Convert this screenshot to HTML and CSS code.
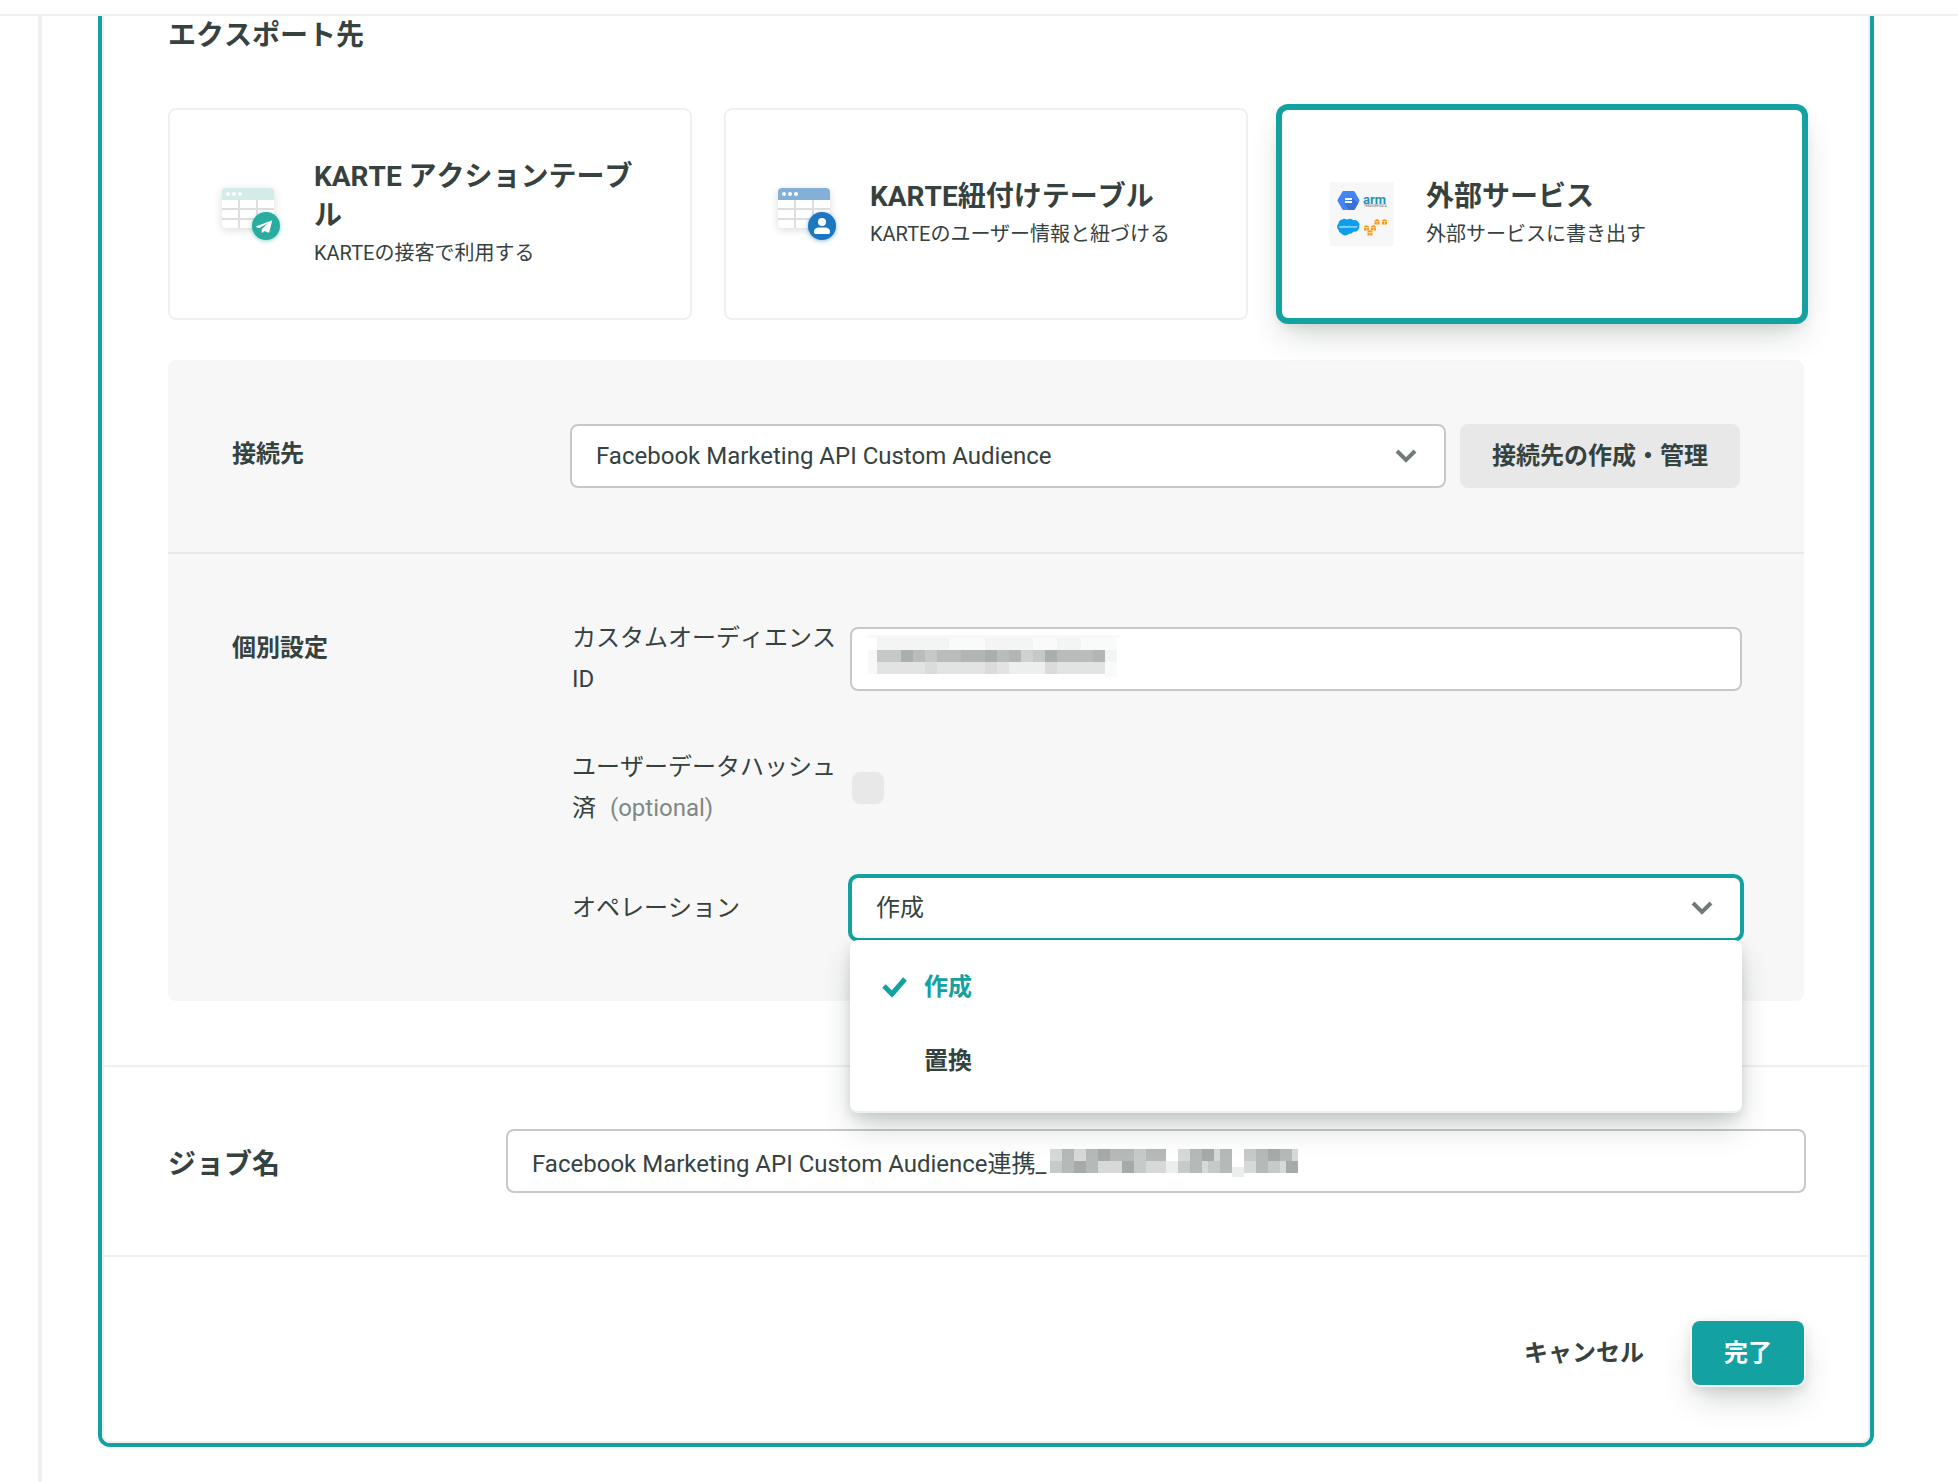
FILE: index.html
```html
<!DOCTYPE html>
<html lang="ja">
<head>
<meta charset="utf-8">
<meta name="viewport" content="width=device-width, initial-scale=1">
<title>エクスポート先</title>
<link rel="stylesheet" href="styles.css">
</head>
<body>
<header class="topbar"></header>
<div class="layout">
  <aside class="rail"></aside>
  <main class="main">
    <form class="card">
      <section class="export">
        <h2 class="heading">エクスポート先</h2>
        <div class="targets">
          <button type="button" class="target">
            <svg class="target-icon" viewBox="0 0 64 64" aria-hidden="true">
              <rect class="sheet" x="4" y="6" width="52" height="40" rx="4"/>
              <path fill="#d4ece9" d="M8 6h44a4 4 0 0 1 4 4v8H4v-8a4 4 0 0 1 4-4z"/>
              <path stroke="#dedede" stroke-width="2" d="M4 27h52M4 37h52M21 18v28M39 18v28"/>
              <g fill="#fff"><circle cx="10" cy="12" r="2"/><circle cx="16" cy="12" r="2"/><circle cx="22" cy="12" r="2"/></g>
              <circle class="badge-teal" cx="48" cy="44" r="14"/>
              <path fill="#fff" d="M53.500 38.500 38.500 44.200q-.9.500 0 1l3 .9 8.500-5-6.300 6.100v3q.2 1 1 .4l1.700-1.700 3.600 1.700q1 .3 1.300-.7l2.700-10.500q.1-1.200-.5-.9z"/>
            </svg>
            <span class="target-text"><span class="target-title">KARTE アクションテーブル</span><span class="target-note">KARTEの接客で利用する</span></span>
          </button>
          <button type="button" class="target">
            <svg class="target-icon" viewBox="0 0 64 64" aria-hidden="true">
              <rect class="sheet" x="4" y="6" width="52" height="40" rx="4"/>
              <path fill="#82b0d9" d="M8 6h44a4 4 0 0 1 4 4v8H4v-8a4 4 0 0 1 4-4z"/>
              <path stroke="#dedede" stroke-width="2" d="M4 27h52M4 37h52M21 18v28M39 18v28"/>
              <g fill="#fff"><circle cx="10" cy="12" r="2"/><circle cx="16" cy="12" r="2"/><circle cx="22" cy="12" r="2"/></g>
              <circle class="badge-blue" cx="48" cy="44" r="14"/>
              <circle fill="#fff" cx="48" cy="40" r="4"/>
              <path fill="#fff" d="M40 50c0-5 5-4.500 8-4.500s8-.5 8 4.500q0 2-1.500 2h-13q-1.500 0-1.500-2z"/>
            </svg>
            <span class="target-text"><span class="target-title">KARTE紐付けテーブル</span><span class="target-note">KARTEのユーザー情報と紐づける</span></span>
          </button>
          <button type="button" class="target target-on" aria-pressed="true">
            <svg class="target-icon" viewBox="0 0 64 64" aria-hidden="true">
              <rect width="64" height="64" rx="2" fill="#f7f7f7"/>
              <path fill="#4285f4" d="M13.500 9h10q.8 0 1.200.7l4.600 8q.5.800 0 1.600l-4.600 8q-.4.700-1.200.7h-10q-.8 0-1.200-.7l-4.600-8q-.5-.8 0-1.600l4.600-8q.4-.7 1.200-.7z"/>
              <path fill="#3a71d8" d="m22 16 6.500 5-3.800 6.500-1.200.5h-4.700l-4-6.500z"/>
              <path fill="#fff" d="M15 16h7v2h-7zM15 19h7v2h-7z"/>
              <text class="logo-arm" x="33" y="22">arm</text>
              <text class="logo-data" x="34" y="25">TREASURE DATA</text>
              <path fill="#0d9dea" d="M12 37.500a5 5 0 0 1 5 .2 5.200 5.200 0 0 1 6.500.5 5 5 0 0 1 5.800 5.800 5 5 0 0 1-6 5.700 4.200 4.200 0 0 1-4.300 2 5 5 0 0 1-8-.4 4 4 0 0 1-2.500-3.200 4.500 4.500 0 0 1 0-6.600 4.600 4.600 0 0 1 3.500-4z"/>
              <text class="logo-cloud" x="9" y="46">salesforce</text>
              <g fill="#f7981d">
                <path d="M44.500 38.500 47 37l2.500 1.500v4h-5zM52 38.500l2.500-1.500 2.500 1.500v4h-5zM34 44.500l2.500-1.500 2.500 1.500v4h-5zM41 44.500l2.500-1.500 2.500 1.500v4h-5zM37.500 49.500l2.500-1.500 2.500 1.500v4h-5z"/>
              </g>
              <path stroke="#fce0b8" stroke-width=".7" d="M44.500 39.500h5M52 39.500h5M34 45.500h5M41 45.500h5M37.500 50.500h5M47 39.500v3M54.500 39.500v3M36.500 45.500v3M43.500 45.500v3M40 50.500v3"/>
            </svg>
            <span class="target-text"><span class="target-title">外部サービス</span><span class="target-note">外部サービスに書き出す</span></span>
          </button>
        </div>

        <div class="panel">
          <div class="panel-row">
            <label class="row-label" for="dest">接続先</label>
            <div class="dest">
              <div class="select-wrap">
                <select class="field" id="dest"><option>Facebook Marketing API Custom Audience</option></select>
                <svg class="chevron" viewBox="0 0 24 16" aria-hidden="true"><path d="m3 3 9 9 9-9"/></svg>
              </div>
              <button type="button" class="btn-sub">接続先の作成・管理</button>
            </div>
          </div>
          <div class="panel-row detail">
            <div class="row-label">個別設定</div>
            <div class="options">
              <label class="opt-label" for="audience">カスタムオーディエンス ID</label>
              <div class="masked">
                <input class="field" id="audience" type="text">
                <svg class="mosaic" width="252" height="46" viewBox="0 0 252 46" shape-rendering="crispEdges" aria-hidden="true">
                  <path fill="#f8f8f8" d="M0 0h252v3H0zM0 15h9v24H0z"/>
                  <path fill="#f3f4f4" d="M9 3h72v12H9zM117 3h48v12h-48zM189 3h24v12h-24zM237 15h12v12h-12z"/>
                  <path fill="#f9fafa" d="M81 3h36v12H81zM165 3h24v12h-24zM213 3h36v12h-36zM237 27h12v15h-12z"/>
                  <path fill="#b8bcbb" d="M9 15h228v12H9z"/>
                  <path fill="#c4c8c8" d="M9 15h24v12H9zM57 15h12v12H57zM165 15h12v12h-12z"/>
                  <path fill="#cdd1d1" d="M153 15h12v12h-12z"/>
                  <path fill="#a9afae" d="M33 15h12v12H33zM117 15h12v12h-12zM177 15h12v12h-12z"/>
                  <path fill="#b1b5b4" d="M93 15h24v12H93zM141 15h12v12h-12zM225 15h12v12h-12z"/>
                  <path fill="#e2e4e3" d="M9 27h228v12H9z"/>
                  <path fill="#dadcdb" d="M57 27h12v12H57zM117 27h12v12h-12zM177 27h12v12h-12z"/>
                  <path fill="#edefee" d="M141 27h36v12h-36z"/>
                </svg>
              </div>
              <label class="opt-label" for="hashed">ユーザーデータハッシュ済 <span class="optional">(optional)</span></label>
              <input class="check" id="hashed" type="checkbox">
              <label class="opt-label" for="operation">オペレーション</label>
              <div class="select-wrap">
                <select class="field field-open" id="operation"><option>作成</option><option>置換</option></select>
                <svg class="chevron" viewBox="0 0 24 16" aria-hidden="true"><path d="m3 3 9 9 9-9"/></svg>
                <div class="menu" role="listbox">
                  <button type="button" class="menu-item menu-on" role="option" aria-selected="true"><svg class="tick" viewBox="0 0 26 22" aria-hidden="true"><path d="m2 10 8 8L23 3"/></svg>作成</button>
                  <button type="button" class="menu-item" role="option" aria-selected="false"><span class="tick"></span>置換</button>
                </div>
              </div>
            </div>
          </div>
        </div>
      </section>

      <section class="job">
        <label class="heading job-label" for="job">ジョブ名</label>
        <div class="masked">
          <input class="field" id="job" type="text" value="Facebook Marketing API Custom Audience連携_">
          <svg class="mosaic mosaic-job" width="250" height="30" viewBox="0 0 250 30" shape-rendering="crispEdges" aria-hidden="true">
            <path fill="#d6d9d8" d="M2 2h116v24H2zM130 2h54v24h-54zM196 2h54v24h-54z"/>
            <path fill="#b5b9b8" d="M14 2h12v24H14zM38 2h12v24H38zM62 2h24v12H62zM98 2h20v12H98zM142 2h12v24h-12zM172 2h12v24h-12zM208 2h12v24h-12zM232 2h12v12h-12z"/>
            <path fill="#a6abaa" d="M26 14h12v12H26zM50 2h12v12H50zM74 14h12v12H74zM154 2h12v12h-12zM220 2h12v12h-12zM238 14h12v12h-12z"/>
            <path fill="#c6cac9" d="M2 14h12v12H2zM86 2h12v24H86zM130 14h12v12h-12zM160 14h12v12h-12zM196 2h12v12h-12zM220 14h12v12h-12z"/>
            <path fill="#eceded" d="M118 14h12v12h-12zM184 20h12v10h-12z"/>
          </svg>
        </div>
      </section>

      <footer class="actions">
        <button type="button" class="btn-cancel">キャンセル</button>
        <button type="submit" class="btn-done">完了</button>
      </footer>
    </form>
  </main>
</div>
</body>
</html>
```
FILE: styles.css
```css
:root {
  --ink: #35423f;
  --teal: #13a1a1;
  --line: #f0f0f0;
  --shadow: 0 16px 32px -4px rgba(40, 60, 55, .24), 0 4px 12px rgba(40, 60, 55, .12);
}

* { box-sizing: border-box; }

body {
  margin: 0;
  min-height: 100vh;
  display: flex;
  flex-direction: column;
  background: #fff;
  color: var(--ink);
  font: 24px/41px Roboto, "Noto Sans CJK JP", sans-serif;
}

button, input, select { font: inherit; color: inherit; margin: 0; }
button { cursor: pointer; }

.topbar { height: 16px; border-bottom: 2px solid var(--line); }
.layout { flex: 1; display: flex; }
.rail { flex: none; width: 42px; border-right: 4px solid var(--line); }
.main { flex: 1; min-width: 0; overflow: hidden; padding: 0 88px 39px 60px; }

.card {
  border: 2px solid var(--line);
  border-top: 0;
  border-radius: 0 0 8px 8px;
  box-shadow: 0 0 0 4px var(--teal);
}

.heading { margin: 0; font-size: 28px; line-height: 40px; font-weight: 700; font-kerning: none; }

.export { padding: 0 64px 64px; }

.targets {
  display: grid;
  grid-template-columns: repeat(3, 1fr);
  gap: 32px;
  margin: 52px 0 40px;
}
.target {
  display: flex;
  align-items: center;
  gap: 32px;
  min-height: 212px;
  padding: 0 48px;
  border: 2px solid var(--line);
  border-radius: 8px;
  background: #fff;
  text-align: left;
}
.target-on {
  border-color: var(--teal);
  box-shadow: 0 0 0 4px var(--teal), var(--shadow);
}
.target-icon { flex: none; width: 64px; height: 64px; overflow: visible; }
.target-title { display: block; font-size: 28px; line-height: 39px; font-weight: 700; font-kerning: none; }
.target-note { display: block; font-size: 20px; line-height: 36px; }
.sheet { fill: #fff; filter: drop-shadow(0 2px 4px rgba(0, 0, 0, .14)); }
.badge-teal { fill: #2aaca0; filter: drop-shadow(0 1px 2px rgba(42, 172, 160, .5)); }
.badge-blue { fill: #1c76c0; filter: drop-shadow(0 1px 2px rgba(28, 118, 192, .5)); }
.logo-arm { font: 700 13px Roboto, sans-serif; fill: #1795b8; }
.logo-data { font: 3px Roboto, sans-serif; fill: #666; }
.logo-cloud { font: italic 4px Roboto, sans-serif; fill: #fff; }

.panel { border-radius: 8px; background: #f7f7f7; }
.panel-row {
  display: grid;
  grid-template-columns: 338px minmax(0, 1fr);
  padding: 64px;
}
.detail { border-top: 2px solid #e9e9e9; padding: 64px 62px 61px 64px; }
.row-label { padding-top: 10px; font-weight: 700; }

.dest { display: flex; gap: 14px; }
.dest .select-wrap { flex: 1; }
.select-wrap, .masked { position: relative; }

.field {
  display: block;
  width: 100%;
  height: 64px;
  padding: 0 24px;
  border: 2px solid #c5c9c8;
  border-radius: 8px;
  background: #fff;
  appearance: none;
  outline: none;
}
.field-open { border-color: var(--teal); box-shadow: 0 0 0 2px var(--teal); }
.chevron {
  position: absolute;
  right: 28px;
  top: 24px;
  width: 24px;
  height: 16px;
  fill: none;
  stroke: #727b79;
  stroke-width: 4;
  pointer-events: none;
}

.btn-sub {
  height: 64px;
  padding: 0 32px;
  border: 0;
  border-radius: 8px;
  background: #e8e8e8;
  font-weight: 700;
}

.options {
  display: grid;
  grid-template-columns: 278px minmax(0, 1fr);
  row-gap: 47px;
  align-items: center;
  padding-left: 2px;
}
.opt-label { padding-right: 12px; font-kerning: none; }
.optional { margin-left: 8px; color: #7f8886; }
.check {
  width: 32px;
  height: 32px;
  margin-left: 2px;
  border-radius: 8px;
  background: #e8e8e8;
  appearance: none;
}

.menu {
  position: absolute;
  z-index: 2;
  top: 100%;
  left: 0;
  right: 0;
  padding: 10px 0 13px;
  border-bottom: 2px solid var(--line);
  border-radius: 8px;
  background: #fff;
  box-shadow: var(--shadow);
}
.menu-item {
  display: flex;
  align-items: center;
  gap: 16px;
  width: 100%;
  height: 74px;
  padding: 0 32px;
  border: 0;
  background: none;
  font-weight: 700;
}
.menu-on { color: var(--teal); }
.tick { width: 26px; height: 22px; fill: none; stroke: currentColor; stroke-width: 5; }

.mosaic { position: absolute; left: 18px; top: 8px; pointer-events: none; }
.mosaic-job { left: 542px; top: 18px; }

.job {
  display: grid;
  grid-template-columns: 338px minmax(0, 1fr);
  align-items: center;
  padding: 62px 62px 62px 64px;
  border-top: 2px solid var(--line);
  border-bottom: 2px solid var(--line);
}
.job-label { padding-top: 8px; }

.actions {
  display: flex;
  justify-content: flex-end;
  gap: 16px;
  padding: 64px 64px 56px;
}
.btn-cancel, .btn-done { height: 64px; padding: 0 32px; border: 0; border-radius: 8px; font-weight: 700; }
.btn-cancel { background: none; }
.btn-done {
  background: var(--teal);
  color: #fff;
  box-shadow: 0 0 0 2px #f5f5f5, var(--shadow);
}
```
